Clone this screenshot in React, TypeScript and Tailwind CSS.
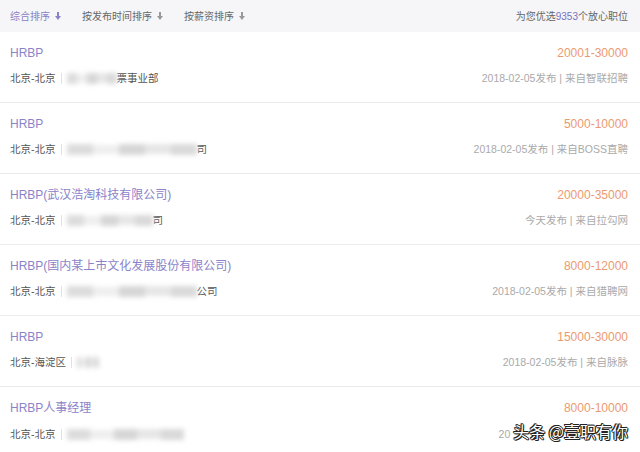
import React from 'react';

type Job = {
  title: string;
  salary: string;
  area: string;
  blur: number;
  suffix: string;
  date: string;
};

const jobs: Job[] = [
  { title: 'HRBP', salary: '20001-30000', area: '北京-北京', blur: 50, suffix: '票事业部', date: '2018-02-05发布 | 来自智联招聘' },
  { title: 'HRBP', salary: '5000-10000', area: '北京-北京', blur: 130, suffix: '司', date: '2018-02-05发布 | 来自BOSS直聘' },
  { title: 'HRBP(武汉浩淘科技有限公司)', salary: '20000-35000', area: '北京-北京', blur: 86, suffix: '司', date: '今天发布 | 来自拉勾网' },
  { title: 'HRBP(国内某上市文化发展股份有限公司)', salary: '8000-12000', area: '北京-北京', blur: 130, suffix: '公司', date: '2018-02-05发布 | 来自猎聘网' },
  { title: 'HRBP', salary: '15000-30000', area: '北京-海淀区', blur: 22, suffix: '', date: '2018-02-05发布 | 来自脉脉' },
  { title: 'HRBP人事经理', salary: '8000-10000', area: '北京-北京', blur: 118, suffix: '', date: '20' },
];

const SortArrow = ({ active }: { active?: boolean }) => (
  <svg width="6" height="8" viewBox="0 0 6 8" className="ml-[5px]">
    <rect x="2" y="0" width="2" height="4" fill={active ? '#8a82c6' : '#999'} />
    <path d="M0 4 L6 4 L3 8 Z" fill={active ? '#8a82c6' : '#999'} />
  </svg>
);

const Smudge = ({ w }: { w: number }) => (
  <span className="inline-flex items-center h-[14px] blur-[2.5px]" style={{ width: w }}>
    <span className="h-[11px] flex-1 bg-[#dcdcdc]" />
    <span className="h-[9px] flex-1 bg-[#eeeeee]" />
    <span className="h-[11px] flex-1 bg-[#d6d6d6]" />
    <span className="h-[10px] flex-1 bg-[#e6e6e6]" />
    <span className="h-[11px] flex-1 bg-[#d9d9d9]" />
  </span>
);

export default function App() {
  return (
    <div className="w-[640px] h-[452px] overflow-hidden bg-white font-['Liberation_Sans','Noto_Sans_CJK_SC',sans-serif]">
      <div className="flex items-center h-8 pl-[10px] pr-3 bg-[#f6f6f8] text-[10px] text-[#666]">
        <span className="flex items-center text-[#8a82c6]">综合排序<SortArrow active /></span>
        <span className="flex items-center ml-[21px]">按发布时间排序<SortArrow /></span>
        <span className="flex items-center ml-[21px]">按薪资排序<SortArrow /></span>
        <span className="ml-auto">为您优选<span className="text-[#7a70bd]">9353</span>个放心职位</span>
      </div>
      {jobs.map((j, i) => (
        <div key={i} className="h-[71px] pl-[10px] pr-3 pt-[12px] border-b border-[#ececec]">
          <div className="flex justify-between items-center leading-[18px]">
            <span className="text-[12px] text-[#8a83c9]">{j.title}</span>
            <span className="text-[12px] text-[#eb9a70]">{j.salary}</span>
          </div>
          <div className="flex justify-between items-center mt-[9px] leading-[14px] text-[10.5px]">
            <span className="flex items-center text-[#555]">
              {j.area}
              <span className="w-px h-[11px] bg-[#e2e2e2] mx-[5px]" />
              <Smudge w={j.blur} />
              <span>{j.suffix}</span>
            </span>
            <span className="flex items-center text-[#aaa]">
              {j.date}
              {i === jobs.length - 1 && (
                <span className="ml-[3px] -mt-[6px] text-[16px] leading-[22px] text-white font-['Noto_Sans_CJK_SC',sans-serif] [text-shadow:-1px_0_#222,1px_0_#222,0_-1px_#222,0_1px_#222,1px_1px_#222,-1px_-1px_#222]">
                  头条 @壹职有你
                </span>
              )}
            </span>
          </div>
        </div>
      ))}
    </div>
  );
}
